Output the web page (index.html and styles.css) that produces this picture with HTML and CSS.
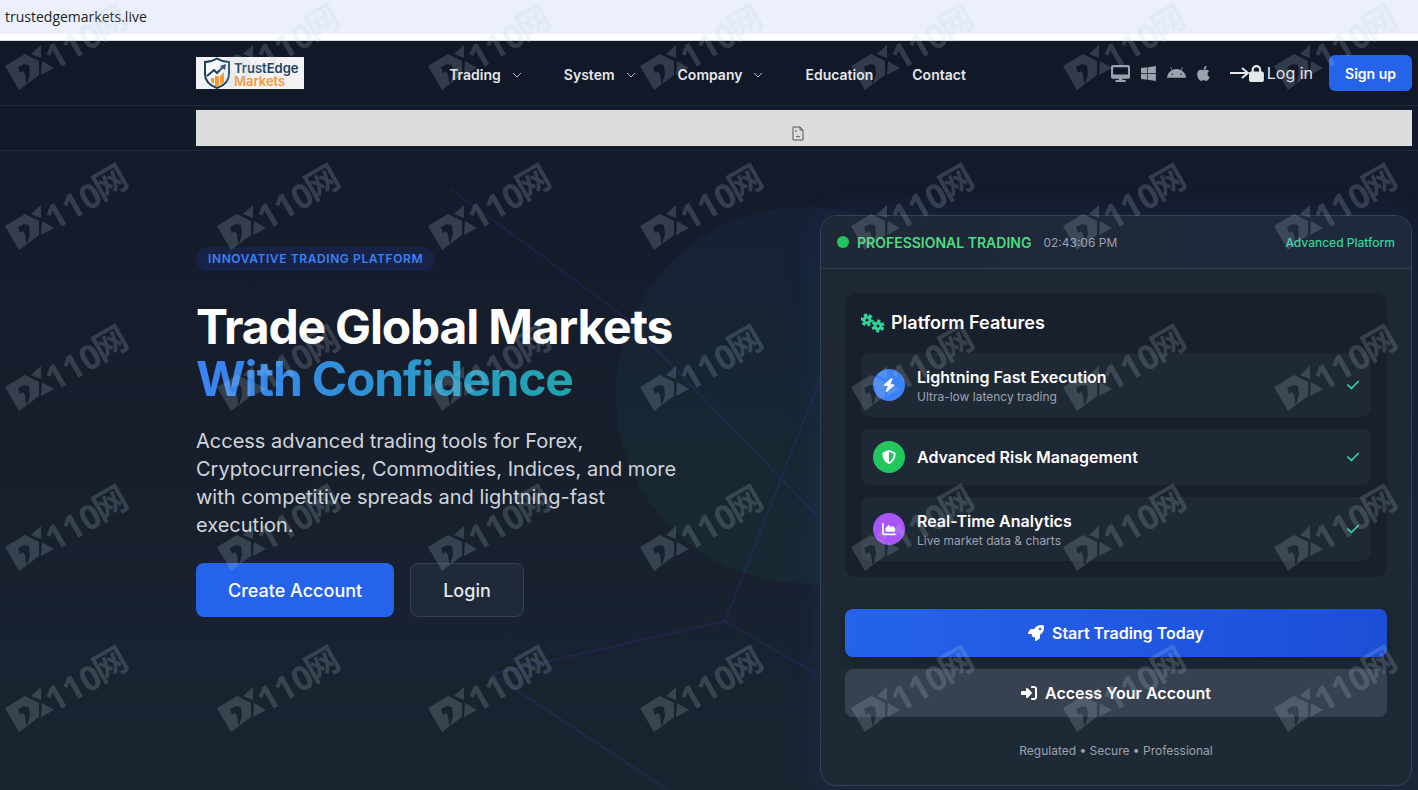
FILE: index.html
```html
<!DOCTYPE html>
<html lang="en">
<head>
  <meta charset="UTF-8">
  <meta name="viewport" content="width=device-width, initial-scale=1.0">
  <title>TrustEdge Markets</title>
  <link rel="stylesheet" href="styles.css">
</head>
<body>

  <div class="address-bar">trustedgemarkets.live</div>

  <header class="header">
    <a href="#" class="logo">
      <svg class="logo-shield" viewBox="0 0 28 32" aria-hidden="true">
        <path d="M14 1.500 C10 4 6 5 2 5 V17 C2 24 7 28.500 14 31 C21 28.500 26 24 26 17 V5 C22 5 18 4 14 1.500Z" fill="#f8f8fa" stroke="#17415f" stroke-width="2"/>
        <path d="M8 21h3v6l-3-2zM12 19h4v10l-2 1-2-1zM17 19l4-4v10l-4 3z" fill="#f39a35"/>
        <path d="M4 19l7-6 3 3 7-7" fill="none" stroke="#17415f" stroke-width="2"/>
        <path d="M17 9l6-2-1 6z" fill="#17415f"/>
      </svg>
      <span class="logo-text">TrustEdge<span class="logo-accent">Markets</span></span>
    </a>

    <nav class="nav">
      <a href="#">Trading
        <svg class="chevron" viewBox="0 0 16 16" aria-hidden="true"><path d="M4 6l4 4 4-4"/></svg>
      </a>
      <a href="#">System
        <svg class="chevron" viewBox="0 0 16 16" aria-hidden="true"><path d="M4 6l4 4 4-4"/></svg>
      </a>
      <a href="#">Company
        <svg class="chevron" viewBox="0 0 16 16" aria-hidden="true"><path d="M4 6l4 4 4-4"/></svg>
      </a>
      <a href="#">Education</a>
      <a href="#">Contact</a>
    </nav>

    <div class="actions">
      <div class="platforms">
        <a href="#" aria-label="Desktop"><svg viewBox="0 0 576 512"><path d="M64 0C28.700 0 0 28.700 0 64V352c0 35.300 28.700 64 64 64H240l-10.700 32H160c-17.700 0-32 14.300-32 32s14.300 32 32 32H416c17.700 0 32-14.300 32-32s-14.300-32-32-32H346.700L336 416H512c35.300 0 64-28.700 64-64V64c0-35.300-28.700-64-64-64H64zM512 64V288H64V64H512z"/></svg></a>
        <a href="#" aria-label="Windows"><svg viewBox="0 0 448 512"><path d="M0 93.700l183.600-25.300v177.400H0V93.700zm0 324.600l183.600 25.300V268.400H0v149.900zm203.800 28L448 480V268.400H203.800v177.900zm0-380.600v180.100H448V32L203.800 65.700z"/></svg></a>
        <a href="#" aria-label="Android"><svg viewBox="0 0 576 512"><path d="M420.550,301.930a24,24,0,1,1,24-24,24,24,0,0,1-24,24m-265.100,0a24,24,0,1,1,24-24,24,24,0,0,1-24,24m273.700-144.480,47.940-83a10,10,0,1,0-17.270-10h0l-48.540,84.070a301.250,301.250,0,0,0-246.560,0L116.180,64.450a10,10,0,1,0-17.270,10h0l47.940,83C64.530,202.220,8.240,285.550,0,384H576c-8.240-98.450-64.540-181.780-146.850-226.550"/></svg></a>
        <a href="#" aria-label="Apple"><svg viewBox="0 0 384 512"><path d="M318.700 268.700c-.2-36.700 16.400-64.400 50-84.800-18.800-26.900-47.200-41.700-84.700-44.600-35.500-2.800-74.300 20.700-88.500 20.700-15 0-49.400-19.700-76.400-19.700C63.300 141.200 4 184.800 4 273.500q0 39.300 14.400 81.200c12.800 36.700 59 126.700 107.200 125.200 25.200-.6 43-17.900 75.800-17.900 31.800 0 48.300 17.900 76.400 17.900 48.600-.7 90.400-82.500 102.600-119.300-65.200-30.700-61.700-90-61.700-91.900zm-56.600-164.200c27.300-32.400 24.800-61.900 24-72.500-24.100 1.400-52 16.400-67.900 34.900-17.500 19.800-27.800 44.300-25.600 71.900 26.100 2 49.900-11.400 69.500-34.300z"/></svg></a>
      </div>
      <a href="#" class="login-link">
        <svg class="login-arrow" viewBox="0 0 19 16" aria-hidden="true"><path d="M0 8h18M12 3l6 5-6 5"/></svg>
        <svg class="login-lock" viewBox="0 0 448 512" aria-hidden="true"><path d="M144 144v48H304V144c0-44.200-35.800-80-80-80s-80 35.800-80 80zM80 192V144C80 64.500 144.500 0 224 0s144 64.500 144 144v48h16c35.300 0 64 28.700 64 64V448c0 35.300-28.700 64-64 64H64c-35.300 0-64-28.700-64-64V256c0-35.300 28.700-64 64-64H80z"/></svg>
        <span>Log in</span>
      </a>
      <button class="signup">Sign up</button>
    </div>
  </header>

  <div class="ticker">
    <div class="ticker-frame">
      <svg viewBox="0 0 12 15" aria-hidden="true"><path d="M1 1h7l3 3v10H1zM8 1v3h3M4 4v2M4 11c1-1 3-1 4 0"/></svg>
    </div>
  </div>

  <main class="hero">
    <!-- Background network lines -->
    <svg class="hero-art" viewBox="0 0 1418 639" preserveAspectRatio="xMinYMin slice" aria-hidden="true">
      <defs>
        <linearGradient id="orb" x1="0" y1="0" x2="0" y2="1">
          <stop offset="0" stop-color="#3b82f6"/>
          <stop offset="0.700" stop-color="#10b981"/>
        </linearGradient>
      </defs>
      <circle cx="804" cy="244" r="188" fill="url(#orb)" opacity="0.055"/>
      <path d="M451 38L625 166L820 368M820 229L725 470L820 525M725 470L492 523L668 639" fill="none" stroke="#4f46e5" stroke-width="2" opacity="0.150"/>
    </svg>

    <section class="intro">
      <span class="badge">Innovative Trading Platform</span>
      <h1>Trade Global Markets <span class="gradient-text">With Confidence</span></h1>
      <p>Access advanced trading tools for Forex, Cryptocurrencies, Commodities, Indices, and more with competitive spreads and lightning-fast execution.</p>
      <div class="intro-buttons">
        <button class="btn-create">Create Account</button>
        <button class="btn-login">Login</button>
      </div>
    </section>

    <section class="card">
      <div class="card-header">
        <span class="status-dot"></span>
        <span class="status">PROFESSIONAL TRADING</span>
        <span class="time">02:43:06 PM</span>
        <span class="plan">Advanced Platform</span>
      </div>
      <div class="card-body">
        <div class="features">
          <h2>
            <svg class="gears" viewBox="0 0 24 20" aria-hidden="true">
              <g fill="none" stroke="#34d399">
                <circle cx="6" cy="7" r="3" stroke-width="3"/>
                <circle cx="6" cy="7" r="5" stroke-width="3" stroke-dasharray="3 2.236" stroke-dashoffset="1"/>
                <circle cx="17" cy="13" r="3" stroke-width="3"/>
                <circle cx="17" cy="13" r="5" stroke-width="3" stroke-dasharray="3 2.236" stroke-dashoffset="4"/>
              </g>
            </svg>
            Platform Features
          </h2>
          <ul>
            <li>
              <span class="circle blue"><svg viewBox="0 0 448 512" aria-hidden="true"><path d="M349.400 44.600c5.900-13.700 1.500-29.700-10.600-38.500s-28.600-8-39.900 1.800l-256 224c-10 8.800-13.600 22.900-8.900 35.300S50.700 288 64 288H175.500L98.600 467.400c-5.900 13.700-1.500 29.700 10.600 38.500s28.600 8 39.900-1.800l256-224c10-8.800 13.600-22.900 8.900-35.300s-16.600-20.700-30-20.700H272.500L349.400 44.600z"/></svg></span>
              <div class="feature-text"><strong>Lightning Fast Execution</strong><small>Ultra-low latency trading</small></div>
              <svg class="check" viewBox="0 0 448 512" aria-hidden="true"><path d="M438.600 105.400c12.500 12.500 12.500 32.800 0 45.300l-256 256c-12.500 12.500-32.800 12.500-45.300 0l-128-128c-12.500-12.500-12.500-32.800 0-45.300s32.800-12.500 45.300 0L160 338.700 393.400 105.400c12.500-12.500 32.800-12.500 45.300 0z"/></svg>
            </li>
            <li>
              <span class="circle green"><svg viewBox="0 0 512 512" aria-hidden="true"><path d="M256 0c4.600 0 9.200 1 13.400 2.900L457.700 82.800c22 9.300 38.400 31 38.300 57.200c-.5 99.200-41.300 280.700-213.600 363.200c-16.700 8-36.100 8-52.800 0C57.300 420.700 16.500 239.200 16 140c-.1-26.200 16.300-47.900 38.300-57.200L242.700 2.900C246.800 1 251.400 0 256 0zm0 66.800V444.800C394 378 431.100 230.100 432 141.400L256 66.800z"/></svg></span>
              <div class="feature-text"><strong>Advanced Risk Management</strong></div>
              <svg class="check" viewBox="0 0 448 512" aria-hidden="true"><path d="M438.600 105.400c12.500 12.500 12.500 32.800 0 45.300l-256 256c-12.500 12.500-32.800 12.500-45.300 0l-128-128c-12.500-12.500-12.500-32.800 0-45.300s32.800-12.500 45.300 0L160 338.700 393.400 105.400c12.500-12.500 32.800-12.500 45.300 0z"/></svg>
            </li>
            <li>
              <span class="circle purple"><svg viewBox="0 0 512 512" aria-hidden="true"><path d="M64 64c0-17.700-14.300-32-32-32S0 46.300 0 64V400c0 44.200 35.800 80 80 80H480c17.700 0 32-14.300 32-32s-14.300-32-32-32H80c-8.800 0-16-7.200-16-16V64zm96 288H448c17.700 0 32-14.300 32-32V251.800c0-7.600-2.700-15-7.700-20.800l-65.800-76.800c-12.100-14.200-33.700-15-46.900-1.800l-21 21c-10 10-26.400 9.200-35.400-1.600l-39.200-47c-12.600-15.100-35.700-15.400-48.700-.6L135.900 215c-5.100 5.800-7.900 13.300-7.900 21.100v84c0 17.700 14.300 32 32 32z"/></svg></span>
              <div class="feature-text"><strong>Real-Time Analytics</strong><small>Live market data &amp; charts</small></div>
              <svg class="check" viewBox="0 0 448 512" aria-hidden="true"><path d="M438.600 105.400c12.500 12.500 12.500 32.800 0 45.300l-256 256c-12.500 12.500-32.800 12.500-45.300 0l-128-128c-12.500-12.500-12.500-32.800 0-45.300s32.800-12.500 45.300 0L160 338.700 393.400 105.400c12.500-12.500 32.800-12.500 45.300 0z"/></svg>
            </li>
          </ul>
        </div>
        <div class="card-buttons">
          <button class="btn-start">
            <svg viewBox="0 0 512 512" aria-hidden="true"><path d="M156.600 384.900L125.700 354c-8.500-8.500-11.500-20.800-7.700-32.200c3-8.900 7-20.500 11.800-33.800L24 288c-8.600 0-16.600-4.600-20.900-12.100s-4.200-16.700 .2-24.100l52.500-88.500c13-21.900 36.500-35.300 61.900-35.300l82.300 0c2.400-4 4.800-7.700 7.200-11.300C289.100-4.100 411.100-8.100 483.900 5.300c11.600 2.100 20.600 11.200 22.800 22.800c13.400 72.900 9.300 194.800-111.400 276.700c-3.500 2.400-7.300 4.800-11.300 7.200v82.300c0 25.400-13.400 49-35.300 61.900l-88.500 52.500c-7.400 4.400-16.600 4.500-24.100 .2s-12.100-12.200-12.100-20.900V380.800c-14.100 4.900-26.400 8.900-35.700 11.900c-11.200 3.600-23.400 .5-31.800-7.800zM384 168a40 40 0 1 0 0-80 40 40 0 1 0 0 80z"/></svg>
            Start Trading Today
          </button>
          <button class="btn-access">
            <svg viewBox="0 0 512 512" aria-hidden="true"><path d="M217.900 105.900L340.700 228.700c7.200 7.200 11.300 17.100 11.300 27.300s-4.100 20.100-11.300 27.300L217.900 406.100c-6.400 6.400-15 9.900-24 9.900c-18.700 0-33.900-15.200-33.900-33.900V320H32c-17.700 0-32-14.300-32-32V224c0-17.700 14.300-32 32-32H160V129.900c0-18.700 15.200-33.900 33.900-33.900c9 0 17.600 3.600 24 9.900zM352 416h64c17.700 0 32-14.300 32-32V128c0-17.700-14.300-32-32-32H352c-17.700 0-32-14.300-32-32s14.300-32 32-32h64c53 0 96 43 96 96V384c0 53-43 96-96 96H352c-17.700 0-32-14.300-32-32s14.300-32 32-32z"/></svg>
            Access Your Account
          </button>
        </div>
        <p class="card-note">Regulated • Secure • Professional</p>
      </div>
    </section>
  </main>

  <!-- Repeating watermark -->
  <svg class="watermark" aria-hidden="true">
    <defs>
      <g id="mark">
        <path fill-rule="evenodd" d="M5 66L25 54L39 61V75L19 90ZM18 67L24 64L29 65L30 74L27 84L26 82L25 74L23 71L20 73Z"/>
        <path d="M41 45V58L31 54ZM42 61L54 68L41 75Z"/>
        <g transform="translate(54 71) rotate(-30)">
          <text class="watermark-digits" x="0" y="0">110</text>
          <text class="watermark-han" x="56" y="-2">网</text>
        </g>
      </g>
      <pattern id="tiles" width="423" height="321" patternUnits="userSpaceOnUse">
        <use href="#mark"/>
        <use href="#mark" x="212"/>
        <use href="#mark" y="160"/>
        <use href="#mark" x="212" y="160"/>
      </pattern>
    </defs>
    <rect width="100%" height="100%" fill="url(#tiles)"/>
  </svg>

</body>
</html>
```
FILE: styles.css
```css
/* General Styles */
* {
  box-sizing: border-box;
}

body {
  margin: 0;
  min-height: 100vh;
  display: flex;
  flex-direction: column;
  font-family: Inter, "Noto Sans CJK SC", sans-serif;
  background: #111827;
  color: #fff;
  overflow: hidden;
}

a {
  color: inherit;
  text-decoration: none;
}

button {
  font-family: inherit;
  color: #fff;
  border: none;
  cursor: pointer;
}

.address-bar {
  height: 41px;
  padding: 7px 5px;
  font-family: "Open Sans", sans-serif;
  font-size: 14px;
  line-height: 20px;
  color: #1f1f1f;
  background: linear-gradient(#ebf0fa 34px, #fff 34px);
  border-bottom: 1px solid #d5d9dc;
}

/* Header */
.header {
  display: flex;
  justify-content: space-between;
  align-items: center;
  height: 65px;
  padding: 0 6px 0 196px;
  border-bottom: 1px solid #1f2937;
}

.logo {
  display: flex;
  align-items: center;
  width: 108px;
  height: 32px;
  padding-left: 7px;
  gap: 3px;
  background: #f3f1f4;
}

.logo-shield {
  width: 28px;
  height: 32px;
}

.logo-text {
  display: flex;
  flex-direction: column;
  padding-top: 3px;
  font-size: 13px;
  line-height: 13px;
  font-weight: 600;
  color: #17415f;
}

.logo-accent {
  color: #f39a35;
}

.nav {
  display: flex;
  gap: 39px;
  padding-top: 4px;
  font-size: 14px;
  line-height: 20px;
  font-weight: 600;
  color: #e5e7eb;
}

.nav a {
  display: flex;
  align-items: center;
  gap: 8px;
}

.chevron {
  width: 16px;
  height: 16px;
  fill: none;
  stroke: #b6bac1;
}

.actions {
  display: flex;
  align-items: center;
  gap: 16px;
}

.platforms {
  display: flex;
  align-items: center;
  gap: 11px;
  padding-right: 4px;
}

.platforms a {
  display: flex;
}

.platforms svg {
  height: 17px;
  fill: #9ca3af;
}

.login-link {
  display: flex;
  align-items: center;
  gap: 3px;
  font-size: 16px;
  color: #e5e7eb;
}

.login-arrow {
  width: 19px;
  height: 16px;
  fill: none;
  stroke: #e5e7eb;
  stroke-width: 2;
}

.login-lock {
  height: 17px;
  margin-left: -3px;
  fill: #e5e7eb;
}

.signup {
  height: 36px;
  padding: 0 16px;
  font-size: 14px;
  font-weight: 600;
  background: #2563eb;
  border-radius: 6px;
}

/* Ticker */
.ticker {
  padding: 4px 6px 4px 196px;
  border-bottom: 1px solid #1f2937;
}

.ticker-frame {
  display: flex;
  justify-content: center;
  align-items: flex-end;
  height: 36px;
  padding: 5px 12px 5px 0;
  background: #ddd;
}

.ticker-frame svg {
  width: 12px;
  height: 15px;
  fill: none;
  stroke: #555;
}

/* Hero */
.hero {
  position: relative;
  flex: 1;
  display: grid;
  grid-template-columns: 1fr 1fr;
  align-items: start;
  gap: 32px;
  padding: 64px 6px 4px 196px;
  background: linear-gradient(#141a29, #1a2431);
}

.hero-art {
  position: absolute;
  top: 0;
  left: 0;
  width: 100%;
  height: 100%;
}

.intro {
  position: relative;
  padding-top: 32px;
}

.badge {
  display: inline-block;
  padding: 4px 12px;
  font-size: 12px;
  line-height: 16px;
  font-weight: 600;
  letter-spacing: 0.05em;
  text-transform: uppercase;
  color: #3b82f6;
  background: #172346;
  border-radius: 12px;
}

h1 {
  margin: 30px 0 22px;
  font-size: 48px;
  line-height: 52px;
  font-weight: 700;
  letter-spacing: -0.025em;
}

.gradient-text {
  display: block;
  background: linear-gradient(to right, #3b82f6, #10b981);
  background-clip: text;
  color: transparent;
}

.intro p {
  max-width: 512px;
  margin: 0 0 24px;
  font-size: 20px;
  line-height: 28px;
  color: #d1d5db;
}

.intro-buttons {
  display: flex;
  gap: 16px;
}

.intro-buttons button {
  height: 54px;
  padding: 0 32px;
  font-size: 18px;
  font-weight: 500;
  border-radius: 8px;
}

.intro-buttons .btn-create {
  background: #2563eb;
}

.intro-buttons .btn-login {
  color: #e5e7eb;
  background: #1f2937;
  border: 1px solid #374151;
}

/* Platform card */
.card {
  position: relative;
  background: linear-gradient(#1c2733, #1e2936);
  border: 1px solid #374151;
  border-radius: 16px;
  box-shadow: 0 0 32px rgba(37, 99, 235, 0.15);
}

.card-header {
  display: flex;
  align-items: center;
  height: 53px;
  padding: 0 16px;
  background: linear-gradient(to right, #1f2836, #1f293d);
  border-bottom: 1px solid #374151;
  border-radius: 15px 15px 0 0;
}

.status-dot {
  width: 12px;
  height: 12px;
  margin-right: 8px;
  background: #22c55e;
  border-radius: 50%;
}

.status {
  margin-right: 12px;
  font-size: 14px;
  font-weight: 600;
  color: #4ade80;
}

.time {
  font-size: 12px;
  color: #9ca3af;
}

.plan {
  margin-left: auto;
  font-size: 12px;
  font-weight: 500;
  color: #34d399;
}

.card-body {
  padding: 24px;
}

.features {
  padding: 16px;
  background: #181f2d;
  border-radius: 12px;
}

h2 {
  display: flex;
  align-items: center;
  gap: 6px;
  margin: 0 0 16px;
  font-size: 18px;
  line-height: 28px;
  font-weight: 600;
}

.gears {
  width: 24px;
  height: 20px;
}

ul {
  display: flex;
  flex-direction: column;
  gap: 12px;
  margin: 0;
  padding: 0;
  list-style: none;
}

li {
  display: flex;
  align-items: center;
  gap: 12px;
  padding: 12px;
  background: #1f2835;
  border-radius: 8px;
}

.circle {
  display: flex;
  justify-content: center;
  align-items: center;
  width: 32px;
  height: 32px;
  border-radius: 50%;
}

.circle svg {
  height: 14px;
  fill: #fff;
}

.blue {
  background: #3b82f6;
}

.green {
  background: #22c55e;
}

.purple {
  background: #a855f7;
}

.feature-text {
  display: flex;
  flex: 1;
  flex-direction: column;
}

.feature-text strong {
  font-size: 16px;
  line-height: 24px;
  font-weight: 600;
}

.feature-text small {
  font-size: 12px;
  line-height: 16px;
  color: #9ca3af;
}

.check {
  height: 14px;
  fill: #34d399;
}

.card-buttons {
  display: flex;
  flex-direction: column;
  gap: 12px;
  margin-top: 32px;
}

.card-buttons button {
  display: flex;
  justify-content: center;
  align-items: center;
  gap: 8px;
  height: 48px;
  font-size: 16px;
  font-weight: 600;
  border-radius: 8px;
}

.card-buttons svg {
  height: 16px;
  fill: #fff;
}

.card-buttons .btn-start {
  background: linear-gradient(to right, #2563eb, #1d4ed8);
  box-shadow: 0 4px 12px rgba(0, 0, 0, 0.2);
}

.card-buttons .btn-access {
  background: #384150;
}

.card-note {
  margin: 24px 0 0;
  font-size: 12px;
  line-height: 20px;
  text-align: center;
  color: #9ca3af;
}

/* Watermark */
.watermark {
  position: absolute;
  top: 0;
  left: 0;
  width: 100%;
  height: 100%;
  fill: #bed2dc;
  opacity: 0.19;
  pointer-events: none;
}

.watermark-digits {
  font-family: "Open Sans", sans-serif;
  font-size: 34px;
  font-weight: 700;
}

.watermark-han {
  font-family: "Noto Sans CJK SC", sans-serif;
  font-size: 34px;
  font-weight: 700;
}
```
